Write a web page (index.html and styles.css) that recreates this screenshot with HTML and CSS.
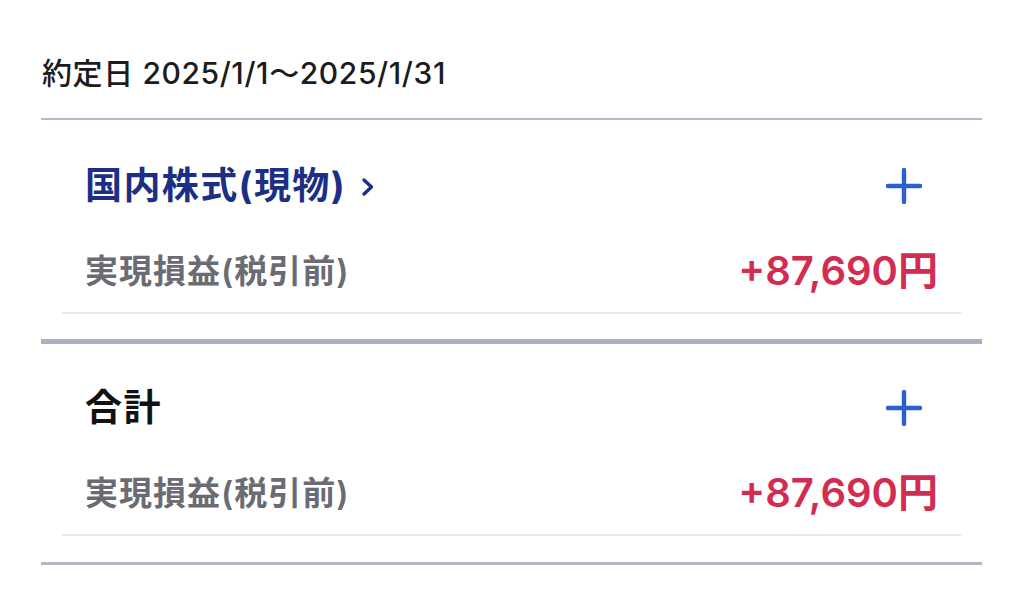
FILE: index.html
```html
<!DOCTYPE html>
<html lang="ja">
<head>
<meta charset="utf-8">
<title>実現損益</title>
<link rel="stylesheet" href="styles.css">
</head>
<body>
<main class="page">
  <div class="period">約定日 2025/1/1〜2025/1/31</div>
  <section class="group group-first">
    <div class="group-head">
      <a class="group-title link" href="#">国内株式(現物)<svg class="chev" viewBox="0 0 14 20" width="14" height="20"><path d="M3 3 L10.5 10 L3 17" fill="none" stroke="currentColor" stroke-width="3.4" stroke-linecap="round" stroke-linejoin="round"/></svg></a>
      <button class="plus" type="button" aria-label="開く"><svg viewBox="0 0 36 36" width="36" height="36"><path d="M18 2 V34 M2 18 H34" fill="none" stroke="currentColor" stroke-width="4.4" stroke-linecap="round"/></svg></button>
    </div>
    <div class="row">
      <span class="label">実現損益(税引前)</span>
      <span class="value">+87,690円</span>
    </div>
  </section>
  <section class="group group-last">
    <div class="group-head">
      <span class="group-title">合計</span>
      <button class="plus" type="button" aria-label="開く"><svg viewBox="0 0 36 36" width="36" height="36"><path d="M18 2 V34 M2 18 H34" fill="none" stroke="currentColor" stroke-width="4.4" stroke-linecap="round"/></svg></button>
    </div>
    <div class="row">
      <span class="label">実現損益(税引前)</span>
      <span class="value">+87,690円</span>
    </div>
  </section>
</main>
</body>
</html>
```
FILE: styles.css
```css
* { box-sizing: border-box; }
html, body { margin: 0; padding: 0; background: #ffffff; }
body {
  font-family: Inter, "Noto Sans CJK JP", "Noto Sans", sans-serif;
  color: #1a1a1a;
}
.page {
  width: 941px;
  margin-left: 41px;
}
.period {
  font-size: 30px;
  line-height: 40px;
  font-weight: 500;
  letter-spacing: 0.6px;
  padding-top: 53px;
  margin-bottom: 25px;
  padding-left: 1px;
  color: #1c1c1e;
}
.group {
  padding: 38px 0 25px;
}
.group-first { border-top: 2px solid #b5bbcb; }
.group-last {
  border-top: 5px solid #a9b0c4;
  border-bottom: 3px solid #b0b6c8;
  padding-top: 36px;
  padding-bottom: 26px;
}
.group-head {
  display: flex;
  align-items: center;
  justify-content: space-between;
  height: 56px;
  padding: 0 60px 0 44px;
}
.group-title {
  font-size: 37px;
  font-weight: 700;
  line-height: 56px;
  letter-spacing: 1.4px;
  color: #111111;
  text-decoration: none;
  display: flex;
  align-items: center;
}
.link { color: #1c2f85; }
.chev { margin-left: 15px; margin-top: 2px; }
.plus {
  border: 0;
  background: none;
  padding: 0;
  width: 36px;
  height: 36px;
  color: #2c5fcb;
  display: flex;
}
.row {
  margin: 0 21px;
  padding: 33px 23px 17px;
  border-bottom: 2px solid #e5e7ee;
  display: flex;
  align-items: center;
  justify-content: space-between;
}
.label {
  font-size: 33px;
  line-height: 48px;
  font-weight: 600;
  letter-spacing: 1px;
  color: #6b6b73;
}
.value {
  font-size: 40px;
  line-height: 48px;
  font-weight: 600;
  color: #d22d51;
}
```
